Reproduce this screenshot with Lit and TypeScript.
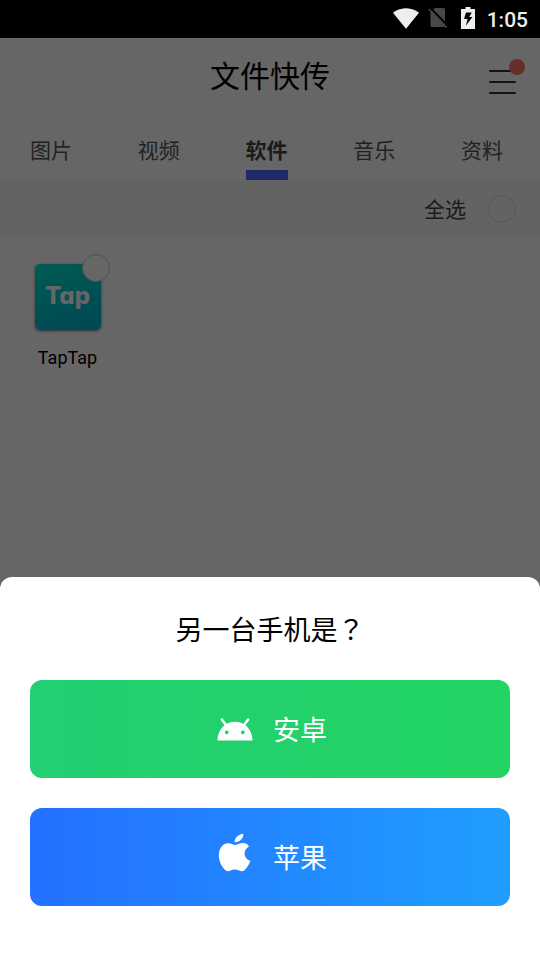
import { LitElement, html, css } from "lit";
import { customElement, state } from "lit/decorators.js";
import { classMap } from "lit/directives/class-map.js";

const wifiIcon = html`<svg class="wifi" viewBox="0.36 3 23.28 18.5" aria-hidden="true">
  <path fill="currentColor" d="M12.01 21.49L23.64 7c-.45-.34-4.93-4-11.64-4C5.28 3 .81 6.66.36 7l11.63 14.49.01.01.01-.01z"/>
</svg>`;

const noSimIcon = html`<svg class="sim" viewBox="0 0 20 20" aria-hidden="true">
  <path fill="#484848" d="M7 0h8.500q1.500 0 1.500 1.500v16q0 1.500-1.500 1.500h-11.500q-1.500 0-1.500-1.500v-13.500z"/>
  <path stroke="#000" stroke-width="2" d="M2.500 0L20 18"/>
  <path stroke="#484848" stroke-width="1.500" d="M.8 1L18.800 19.600"/>
</svg>`;

const batteryIcon = html`<svg class="battery" viewBox="0 0 14 22" aria-hidden="true">
  <path fill="currentColor" fill-rule="evenodd" d="M4.500 0h5v2H14v20H0V2h4.500zM5 5.500L3 12h3.600l-1.800 6.800L11.500 10H8.200L10.800 5.500z"/>
</svg>`;

const robotIcon = html`<svg class="glyph" viewBox="0 0 36 40" aria-hidden="true">
  <path fill="none" stroke="#fff" stroke-width="2.600" stroke-linecap="round" d="M4.800 10.500l4.600 6M31.200 10.500l-4.600 6"/>
  <path fill="#fff" fill-rule="evenodd" d="M.4 31.500C.8 20 8.500 12.800 18 12.800S35.200 20 35.600 31.500zM9.700 21.400a1.900 1.900 0 1 0 0 3.800a1.900 1.900 0 1 0 0-3.800zM25.800 21.400a1.900 1.900 0 1 0 0 3.800a1.900 1.900 0 1 0 0-3.800z"/>
</svg>`;

const fruitIcon = html`<svg class="glyph" viewBox="0 4 36 40" aria-hidden="true">
  <path fill="#fff" d="M26.300.8c.5 4.400-3.800 8.600-8.700 8.400C17.300 5.200 21.500 1.200 26.300.8z"/>
  <path fill="#fff" d="M32 13.400C25.800 16.800 26 25.200 33.300 27.800C32 31.800 29.800 35.400 27.300 37.400C24 39.600 21.600 36.500 17.800 36.500S12 39.500 8.800 37.400C4.600 34.500 1.800 27.500 1.800 22.300C1.800 14.800 6.300 10.300 11.300 10.300C14.200 10.300 16 12 18.200 12C20.300 12 22.500 10.100 25.800 10.100C28.500 10.100 30.600 11.300 32 13.400z"/>
</svg>`;

@customElement("status-bar")
class StatusBar extends LitElement {
  static styles = css`
    :host {
      display: flex;
      justify-content: flex-end;
      align-items: center;
      height: 38px;
      padding-right: 12px;
      background: #000;
      color: #eee;
      font: 500 21px/24px Roboto, sans-serif;
    }
    svg { margin-bottom: 2px; }
    .wifi { width: 26px; height: 21px; margin-right: 9px; }
    .sim { width: 20px; height: 20px; margin-right: 13px; }
    .battery { width: 14px; height: 22px; margin-right: 12px; }
    .clock { padding-top: 2px; }
  `;
  render() {
    return html`${wifiIcon}${noSimIcon}${batteryIcon}<span class="clock">1:05</span>`;
  }
}

@customElement("device-sheet")
class DeviceSheet extends LitElement {
  static styles = css`
    :host {
      display: block;
      box-sizing: border-box;
      padding: 34px 30px 54px;
      border-radius: 12px 12px 0 0;
      background: #fff;
    }
    h2 {
      margin: 0 0 29px;
      font-size: 27px;
      line-height: 40px;
      font-weight: 400;
      text-align: center;
      color: #000;
    }
    .mark { font-family: "Noto Sans CJK TC", sans-serif; line-height: 1; }
    .choices { display: grid; gap: 30px; }
    button {
      display: flex;
      justify-content: center;
      align-items: center;
      gap: 20px;
      height: 98px;
      padding: 0 0 0 4px;
      border: 0;
      border-radius: 12px;
      color: #fff;
      font: inherit;
      font-size: 27px;
      line-height: 40px;
    }
    .label { padding-top: 4px; }
    .android { background: linear-gradient(90deg, #22cf72, #22d463); }
    .apple { background: linear-gradient(90deg, #2470ff, #209eff); }
    .glyph { width: 36px; height: 40px; overflow: visible; }
  `;
  render() {
    return html`
      <h2>另一台手机是<span class="mark" lang="zh-TW">？</span></h2>
      <div class="choices">
        <button class="android" type="button">${robotIcon}<span class="label">安卓</span></button>
        <button class="apple" type="button">${fruitIcon}<span class="label">苹果</span></button>
      </div>
    `;
  }
}

@customElement("app-root")
class AppRoot extends LitElement {
  @state() private active = 2;
  private tabs = ["图片", "视频", "软件", "音乐", "资料"];

  static styles = css`
    :host {
      display: flex;
      flex-direction: column;
      min-height: 100vh;
      background: #fff;
      font-family: Roboto, "Noto Sans CJK SC", sans-serif;
    }
    .screen { position: relative; flex: 1; }
    header {
      display: grid;
      grid-template-columns: 1fr auto 1fr;
      align-items: center;
      height: 78px;
      padding: 0 24px;
    }
    h1 {
      grid-column: 2;
      margin: 0;
      font-size: 30px;
      line-height: 44px;
      font-weight: 400;
      color: #000;
    }
    button {
      padding: 0;
      border: 0;
      background: none;
      font: inherit;
    }
    .menu {
      position: relative;
      justify-self: end;
      display: grid;
      gap: 9px;
      width: 27px;
      margin-top: 10px;
    }
    .menu span { height: 2px; border-radius: 1px; background: #333; }
    .menu .dot {
      position: absolute;
      top: -11px;
      right: -9px;
      width: 16px;
      height: 16px;
      border-radius: 50%;
      background: #ff7466;
    }
    nav {
      display: flex;
      justify-content: space-between;
      padding: 19px 37px 1px 30px;
    }
    .tab {
      padding-bottom: 3px;
      border-bottom: 10px solid transparent;
      font-size: 21px;
      line-height: 32px;
      color: #555;
      width: 42px;
      white-space: nowrap;
    }
    .tab.on { border-color: #4c66ff; font-weight: 700; color: #444; }
    .all {
      display: flex;
      justify-content: flex-end;
      align-items: center;
      gap: 22px;
      height: 56px;
      padding-right: 24px;
      background: #f7f7f7;
      font-size: 21px;
      line-height: 32px;
      color: #444;
    }
    .all span { padding-top: 2px; }
    input {
      appearance: none;
      box-sizing: border-box;
      width: 28px;
      height: 28px;
      margin: 0;
      border: 1px solid #d8d8d8;
      border-radius: 50%;
    }
    .apps {
      display: grid;
      grid-template-columns: repeat(4, 1fr);
      padding-top: 27px;
    }
    .app {
      display: grid;
      justify-items: center;
      gap: 16px;
      color: #000;
      font-size: 18px;
      line-height: 24px;
    }
    .tile {
      position: relative;
      display: grid;
      place-items: center;
      box-sizing: border-box;
      width: 66px;
      height: 66px;
      padding-bottom: 3px;
      border-radius: 5px;
      background: linear-gradient(160deg, #00e6cc, #00b0d4);
      box-shadow: 0 1px 3px #0008;
      color: #fff;
      font: 800 24px/30px Inter, sans-serif;
      font-feature-settings: "cv11";
    }
    .tile input {
      position: absolute;
      top: -10px;
      right: -9px;
      background: #fff;
      border-color: #ccc;
    }
    .scrim { position: absolute; inset: 0; background: rgba(0, 0, 0, 0.6); }
    device-sheet { position: absolute; left: 0; right: 0; bottom: 0; }
  `;

  render() {
    return html`
      <status-bar></status-bar>
      <div class="screen">
        <header>
          <h1>文件快传</h1>
          <button class="menu" type="button" aria-label="菜单">
            <span></span><span></span><span></span><span class="dot"></span>
          </button>
        </header>
        <nav>
          ${this.tabs.map(
            (name, i) => html`<button
              type="button"
              class=${classMap({ tab: true, on: i === this.active })}
              @click=${() => (this.active = i)}
            >${name}</button>`
          )}
        </nav>
        <label class="all"><span>全选</span><input type="checkbox" /></label>
        <div class="apps">
          <label class="app">
            <span class="tile">Tap<input type="checkbox" /></span>
            <span>TapTap</span>
          </label>
        </div>
        <div class="scrim"></div>
        <device-sheet></device-sheet>
      </div>
    `;
  }
}
